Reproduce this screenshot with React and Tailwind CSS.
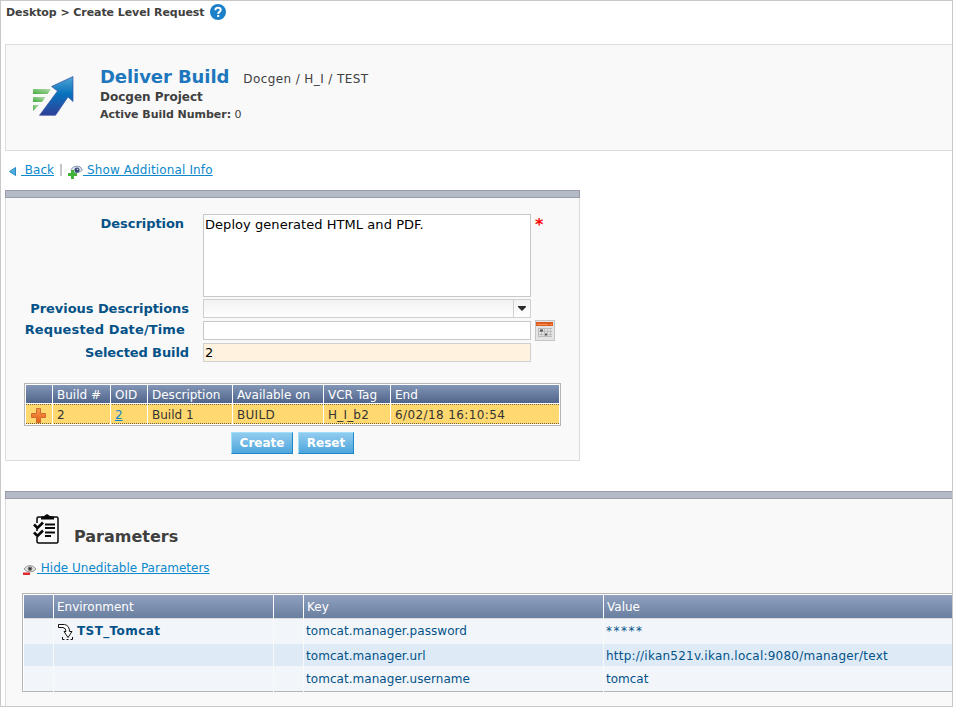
import React from "react";

const Bar = () => <div className="-mx-px h-2 border border-[#989da9] bg-[#b4bac6]" />;

const HelpIcon = () => (
  <svg className="ml-[6px] h-4 w-4" viewBox="0 0 16 16">
    <circle cx="8" cy="8" r="8" fill="#1c80c8" />
    <path d="M5.400 6.200C5.400 4.400 6.400 3.800 8 3.800s2.700.8 2.700 2.200C10.700 7.700 8.200 7.900 8.200 9.900" fill="none" stroke="#fff" strokeWidth="2" />
    <rect x="7.200" y="11" width="2" height="2" fill="#fff" />
  </svg>
);

const LogoIcon = () => (
  <svg className="h-[40px] w-[41px]" viewBox="0 0 41 40">
    <defs>
      <linearGradient id="blue" x1="0" y1="0" x2="0" y2="1">
        <stop offset="0" stopColor="#52a4d4" />
        <stop offset=".45" stopColor="#0872bd" />
        <stop offset="1" stopColor="#2f3f98" />
      </linearGradient>
      <linearGradient id="green" x1="1" y1="0" x2="0" y2="1">
        <stop offset="0" stopColor="#b5dcae" />
        <stop offset="1" stopColor="#45ad3e" />
      </linearGradient>
    </defs>
    <path d="M0 13h18l-3.500 5H0z" fill="url(#green)" />
    <path d="M0 21h12.500L9 26H0z" fill="url(#green)" />
    <path d="M0 29h6l-6 6z" fill="url(#green)" />
    <path d="M40 .5v25l-5-4.500L22.500 39.300H6.500L24.500 15 18.500 10.500z" fill="url(#blue)" stroke="#3c56a5" strokeWidth=".7" />
  </svg>
);

const ShowIcon = () => (
  <svg className="h-[14px] w-[15px]" viewBox="0 0 15 14">
    <path d="M3 4.500Q5 1 9 1T14.500 5Q11 9 4 7z" fill="#dbe2ec" stroke="#8a99b8" />
    <circle cx="9" cy="5" r="2.500" fill="#34466f" />
    <circle cx="9.500" cy="4.300" r=".9" fill="#aebbd5" />
    <path d="M3 5h3v3h3v3H6v3H3v-3H0V8h3z" fill="#3fb335" />
  </svg>
);

const HideIcon = () => (
  <svg className="h-[12px] w-[14px]" viewBox="0 0 14 12">
    <path d="M1 5Q3 1.500 7 1.500T13 5Q11 8 7 8T1 5z" fill="#ddd" stroke="#9a9a9a" />
    <circle cx="7" cy="4.700" r="2.300" fill="#777" />
    <circle cx="7" cy="4.700" r="1" fill="#222" />
    <path d="M0 8.500h7v2.500H0z" fill="#e2272e" />
  </svg>
);

const CalendarIcon = () => (
  <svg className="ml-1 h-[21px] w-5" viewBox="0 0 20 21">
    <rect x=".5" y=".5" width="19" height="20" fill="#e4e4e4" stroke="#c4c4c4" />
    <rect x="1" y="2" width="17" height="4" fill="#df5b1c" />
    <path d="M2 4.500h11M15 4.500h2" stroke="#f2955a" />
    <path d="M3.500 8v9M6.500 8v9M9.500 8v9M12.500 8v9M15.500 8v9M3 8.500h14M3 11.500h14M3 14.500h14M3 16.500h14" stroke="#bcbcbc" />
    <path d="M5 9.500h3v2H5zM10 13.500h2v2h-2z" fill="#555" />
  </svg>
);

const PlusIcon = () => (
  <svg className="h-[15px] w-[15px]" viewBox="0 0 15 15">
    <defs>
      <linearGradient id="plus" x1="0" y1="0" x2="0" y2="1">
        <stop offset="0" stopColor="#f79b50" />
        <stop offset="1" stopColor="#e75f12" />
      </linearGradient>
    </defs>
    <path d="M5.500.5h4v5h5v4h-5v5h-4v-5h-5v-4h5z" fill="url(#plus)" stroke="#cf6a30" />
  </svg>
);

const ClipboardIcon = () => (
  <svg className="h-[30px] w-[27px]" viewBox="0 0 27 30" fill="none" stroke="#080808">
    <path d="M4 9V4.500Q4 3 6 3h17.500q1.500 0 1.500 1.500v23Q25 29 23.500 29H6q-2 0-2-1.500V23M4 14v3" strokeWidth="1.500" />
    <path d="M8 5.500V3l3-1 3-2 3 2 4 1v2.500z" fill="#080808" stroke="none" />
    <path d="M1 10.500l3.500 3.500L10 8.500M1 18.500l3.500 3.500L10 16.500" strokeWidth="2.600" />
    <path d="M12 10.500h10M12 14h10M12 18.500h10M12 22h6" strokeWidth="2.200" />
  </svg>
);

const EnvIcon = () => (
  <svg className="h-4 w-[15px]" viewBox="0 0 15 16" fill="#fff" stroke="#111">
    <path d="M.5.500h6q5 1 5 7h2.500l-4 6-4-6h2q0-3.500-3-4H.5z" strokeWidth="1" />
    <path d="M4.500 13v2.500h2M8.500 15.500h2M12.500 15.500h2V13" fill="none" />
  </svg>
);

const Label = ({ children, className }) => (
  <div className={"w-[188px] shrink-0 text-right text-[13px] font-bold text-[#045287] " + className}>{children}</div>
);

const buildCols = "grid grid-cols-[27px_58px_37px_85px_91px_67px_168px]";
const paramCols = "grid grid-cols-[30px_220px_30px_300px_1fr]";
const buildHeads = ["", "Build #", "OID", "Description", "Available on", "VCR Tag", "End"];
const params = [
  ["tomcat.manager.password", "*****", "h-[25px] bg-[#f2f6fb] leading-[25px]", "tracking-[1.5px]"],
  ["tomcat.manager.url", "http://ikan521v.ikan.local:9080/manager/text", "h-[22px] bg-[#deebf7] leading-[25px]", "tracking-[0.23px]"],
  ["tomcat.manager.username", "tomcat", "h-[25px] bg-[#f2f6fb] leading-[27px]", ""],
];

export default function App() {
  return (
    <div className="flex h-[707px] w-[953px] flex-col overflow-hidden border border-[#c8c8c8] bg-white pl-1 font-['DejaVu_Sans',Verdana,sans-serif] text-[12px] leading-4 whitespace-nowrap text-[#404040]">
      <div className="mt-[3px] flex h-4 items-center pl-px text-[11px] font-bold">
        <span className="pt-px tracking-[-0.07px]">Desktop &gt; Create Level Request</span>
        <HelpIcon />
      </div>

      <div className="mt-[24px] flex h-[107px] border border-r-0 border-[#dcdcdc] bg-[#f9f9f9]">
        <div className="ml-[27px] mt-[31px]"><LogoIcon /></div>
        <div className="ml-[26px] mt-[20px]">
          <div className="flex h-6 items-center">
            <span className="text-[18px] font-bold tracking-[-0.08px] text-[#1e77bd]">Deliver Build</span>
            <span className="ml-[14px] mt-[3px] tracking-[0.4px]">Docgen / H_I / TEST</span>
          </div>
          <div className="text-[12px] leading-[17px] font-bold">Docgen Project</div>
          <div className="text-[11px] leading-[17px]"><b className="tracking-[-0.03px]">Active Build Number:</b> 0</div>
        </div>
      </div>

      <div className="mt-[11px] flex h-4 items-center pl-[4px] text-[#0c88cc]">
        <svg className="mt-[3px] h-[9px] w-[7px]" viewBox="0 0 7 9"><path d="M6.500.5v8L.5 4.500z" fill="#55ade0" stroke="#278ac3" /></svg>
        <a className="ml-[5px] whitespace-pre underline"> Back</a>
        <span className="ml-[6px] h-3 w-[2px] bg-[#c3c6cb]" />
        <span className="ml-[6px] mt-[3px] flex"><ShowIcon /></span>
        <a className="tracking-[0.14px] whitespace-pre underline"> Show Additional Info</a>
      </div>

      <section className="mt-[12px] h-[271px] w-[575px] border border-t-0 border-[#dcdcdc] bg-[#f9f9f9]">
        <Bar />
        <div className="mt-[16px] flex h-[83px]">
          <Label className="pt-[2px] pr-[10px] tracking-[-0.06px]">Description</Label>
          <div className="ml-[9px] w-[328px] border border-[#c8c8c8] bg-white px-px pt-[2px] text-[13px] leading-[15px] tracking-[0.05px] text-black">Deploy generated HTML and PDF.</div>
          <span className="ml-[4px] mt-[3px] text-[16px] font-bold text-[#f00]">*</span>
        </div>
        <div className="mt-[2px] flex h-[19px]">
          <Label className="pt-[2px] pr-[5px] tracking-[-0.06px]">Previous Descriptions</Label>
          <div className="ml-[9px] flex w-[328px] justify-end border border-[#d0d0d0] bg-linear-to-b from-[#f2f2f2] to-white">
            <div className="flex w-[17px] items-center justify-center border-l border-[#d0d0d0]">
              <svg className="h-[5px] w-[8px]" viewBox="0 0 8 5"><path d="M0 0h8v1L4 5 0 1z" fill="#2b2b2b" /></svg>
            </div>
          </div>
        </div>
        <div className="mt-[2px] flex h-[21px]">
          <Label className="pt-[2px] pr-[9px] tracking-[0.13px]">Requested Date/Time</Label>
          <div className="mt-px ml-[9px] h-[19px] w-[328px] border border-[#c8c8c8] bg-white" />
          <CalendarIcon />
        </div>
        <div className="mt-[2px] flex h-[19px]">
          <Label className="pt-[2px] pr-[5px] tracking-[-0.1px]">Selected Build</Label>
          <div className="ml-[9px] w-[328px] border border-[#d0d0d0] bg-[#fff2de] px-px pt-px text-[13px] text-black">2</div>
        </div>

        <div className="mt-[21px] ml-[18px] h-[43px] w-[537px] border border-[#b5b5b5] bg-white p-px">
          <div className={buildCols + " h-[18px] bg-linear-to-b from-[#8396b7] to-[#50658b] text-white"}>
            {buildHeads.map((h, i) => <div key={i} className="border-r border-white pl-[4px] leading-[20px] last:border-0">{h}</div>)}
          </div>
          <div className={buildCols + " mt-px h-[20px] border-y border-dotted border-[#74623a] bg-[#ffd970] text-[#333]"}>
            <div className="flex justify-center border-r border-white pt-[3px] pr-px"><PlusIcon /></div>
            <div className="border-r border-white pl-[4px] leading-[20px]">2</div>
            <div className="border-r border-white pl-[4px] leading-[20px]"><a className="text-[#0c88cc] underline">2</a></div>
            <div className="border-r border-white pl-[4px] leading-[20px]">Build 1</div>
            <div className="border-r border-white pl-[4px] leading-[20px] tracking-[0.3px]">BUILD</div>
            <div className="border-r border-white pl-[4px] leading-[20px] tracking-[0.2px]">H_I_b2</div>
            <div className="pl-[4px] leading-[20px] tracking-[0.4px]">6/02/18 16:10:54</div>
          </div>
        </div>
        <div className="mt-[6px] ml-[225px] flex h-[22px] gap-[5px] text-[12px] leading-5 font-bold text-white">
          <div className="w-[62px] border border-t-[#a0e0fa] border-r-[#2087c8] border-b-[#2087c8] border-l-[#a0e0fa] bg-linear-to-b from-[#92ccef] to-[#4ba6dc] text-center">Create</div>
          <div className="w-[56px] border border-t-[#a0e0fa] border-r-[#2087c8] border-b-[#2087c8] border-l-[#a0e0fa] bg-linear-to-b from-[#92ccef] to-[#4ba6dc] text-center">Reset</div>
        </div>
      </section>

      <section className="mt-[30px] h-[215px] border-l border-[#dcdcdc] bg-[#f9f9f9]">
        <Bar />
        <div className="mt-[15px] ml-[27px] flex h-[32px]">
          <ClipboardIcon />
          <span className="mt-[15px] ml-[14px] text-[16px] font-bold">Parameters</span>
        </div>
        <div className="mt-[14px] ml-[17px] flex h-4 items-center text-[#0c88cc]">
          <span className="mt-1"><HideIcon /></span>
          <a className="whitespace-pre underline"> Hide Uneditable Parameters</a>
        </div>
        <div className="mt-[17px] ml-[16px] h-[99px] border border-r-0 border-[#b5b5b5] bg-white pt-px pl-px">
          <div className={paramCols + " h-[23px] bg-linear-to-b from-[#90a1c0] to-[#6a7e9f] text-white"}>
            {["", "Environment", "", "Key", "Value"].map((h, i) => <div key={i} className="border-r border-white pl-[3px] leading-[24px] last:border-0">{h}</div>)}
          </div>
          <div className="h-px bg-[#dcdcdc]" />
          {params.map(([k, v, c, t], i) => (
            <div key={k} className={paramCols + " text-[#045287] " + c}>
              <div className="border-r border-[#f9f9f9]" />
              <div className="flex border-r border-[#f9f9f9] pl-[4px] font-bold">
                {i === 0 && <><span className="mt-[5px] leading-4"><EnvIcon /></span><span className="ml-[4px] tracking-[0.4px]">TST_Tomcat</span></>}
              </div>
              <div className="border-r border-[#f9f9f9]" />
              <div className="border-r border-[#f9f9f9] pl-[2px] tracking-[0.05px]">{k}</div>
              <div className={"pl-[2px] " + t}>{v}</div>
            </div>
          ))}
        </div>
      </section>
    </div>
  );
}
